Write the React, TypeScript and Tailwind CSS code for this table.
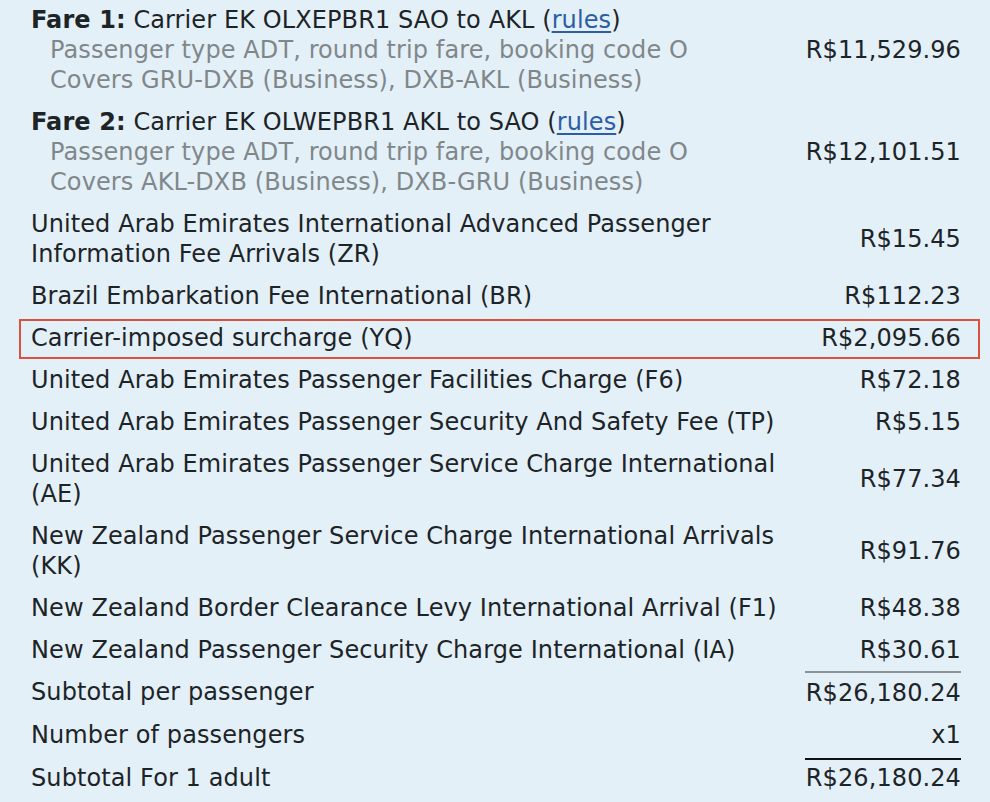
const fares = [
    {
        label: 'Fare 1:',
        text: 'Carrier EK OLXEPBR1 SAO to AKL',
        sub: ['Passenger type ADT, round trip fare, booking code O', 'Covers GRU-DXB (Business), DXB-AKL (Business)'],
        amount: 'R$11,529.96'
    },
    {
        label: 'Fare 2:',
        text: 'Carrier EK OLWEPBR1 AKL to SAO',
        sub: ['Passenger type ADT, round trip fare, booking code O', 'Covers AKL-DXB (Business), DXB-GRU (Business)'],
        amount: 'R$12,101.51'
    }
]

const taxes = [
    { lines: ['United Arab Emirates International Advanced Passenger', 'Information Fee Arrivals (ZR)'], amount: 'R$15.45' },
    { lines: ['Brazil Embarkation Fee International (BR)'], amount: 'R$112.23' },
    { lines: ['Carrier-imposed surcharge (YQ)'], amount: 'R$2,095.66', highlight: true },
    { lines: ['United Arab Emirates Passenger Facilities Charge (F6)'], amount: 'R$72.18' },
    { lines: ['United Arab Emirates Passenger Security And Safety Fee (TP)'], amount: 'R$5.15' },
    { lines: ['United Arab Emirates Passenger Service Charge International', '(AE)'], amount: 'R$77.34' },
    { lines: ['New Zealand Passenger Service Charge International Arrivals', '(KK)'], amount: 'R$91.76' },
    { lines: ['New Zealand Border Clearance Levy International Arrival (F1)'], amount: 'R$48.38' },
    { lines: ['New Zealand Passenger Security Charge International (IA)'], amount: 'R$30.61' }
]

export default function App() {
    return (
        <div
            className="w-[990px] h-[802px] overflow-hidden bg-[#e4f0f7] text-[#1d2428] text-[24px] leading-[30px] tracking-[0.1px] pl-[31px] pr-[29px]"
            style={{ fontFamily: '"DejaVu Sans", Verdana, sans-serif' }}
        >
            {fares.map(fare => (
                <div key={fare.label} className="flex items-center py-[6px] first:pt-[5px]">
                    <div className="flex-1 min-w-0 whitespace-nowrap">
                        <div>
                            <span className="font-bold">{fare.label}</span> {fare.text} (
                            <a className="text-[#2c5da6] underline underline-offset-[3px]">rules</a>)
                        </div>
                        {fare.sub.map(line => (
                            <div key={line} className="pl-[19px] text-[#80878b]">{line}</div>
                        ))}
                    </div>
                    <div className="w-[156px] text-right whitespace-nowrap">{fare.amount}</div>
                </div>
            ))}

            {taxes.map(tax => (
                <div
                    key={tax.amount}
                    className={
                        tax.highlight
                            ? 'flex items-center mt-[2px] pt-[2px] pb-[4px] -ml-[12px] -mr-[19px] pl-[10px] pr-[17px] border-2 border-[#d9523e]'
                            : 'flex items-center py-[6px]'
                    }
                >
                    <div className="flex-1 min-w-0 whitespace-nowrap">
                        {tax.lines.map(line => (
                            <div key={line}>{line}</div>
                        ))}
                    </div>
                    <div className="w-[156px] text-right whitespace-nowrap">{tax.amount}</div>
                </div>
            ))}

            <div className="flex items-stretch">
                <div className="flex-1 py-[6px]">Subtotal per passenger</div>
                <div className="w-[156px] text-right border-t-2 border-[#8d9296] pt-[5px] pb-[6px]">R$26,180.24</div>
            </div>
            <div className="flex items-stretch">
                <div className="flex-1 py-[6px]">Number of passengers</div>
                <div className="w-[156px] text-right border-b-2 border-[#111111] pt-[6px] pb-[8px]">x1</div>
            </div>
            <div className="flex items-stretch -mt-[3px]">
                <div className="flex-1 py-[6px]">Subtotal For 1 adult</div>
                <div className="w-[156px] text-right py-[6px]">R$26,180.24</div>
            </div>
        </div>
    )
}
